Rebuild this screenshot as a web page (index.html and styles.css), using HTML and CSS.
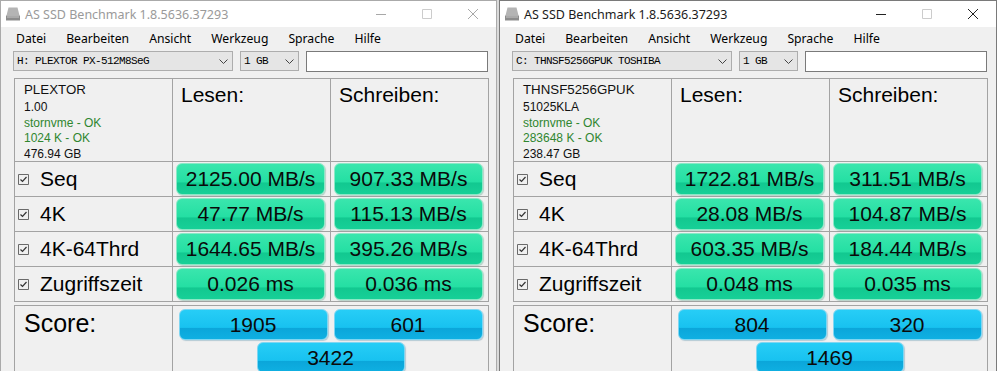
FILE: index.html
```html
<!DOCTYPE html>
<html lang="de">
  <head>
    <meta charset="UTF-8" />
    <meta name="viewport" content="width=device-width, initial-scale=1.0" />
    <title>AS SSD Benchmark</title>
    <link rel="stylesheet" href="styles.css">
  </head>
  <body>
    <div class="desk">
      <!-- left window, inactive -->
      <div class="win">
        <div class="titlebar">
          <svg class="app-icon" viewBox="0 0 16 16">
            <path d="M3.5 1.5h9l2 8h-13z" fill="#b4b4b4" />
            <path d="M1 9.5h14v5H1z" fill="#8c8c8c" />
            <path d="M2 11h12" stroke="#c8c8c8" stroke-width="1" />
          </svg>
          <span class="title">AS SSD Benchmark 1.8.5636.37293</span>
          <div class="caption">
            <span class="cap-btn"><svg viewBox="0 0 10 10"><path d="M0 5.5h10" /></svg></span>
            <span class="cap-btn off"><svg viewBox="0 0 10 10"><path d="M0.5 0.5h9v9h-9z" /></svg></span>
            <span class="cap-btn"><svg viewBox="0 0 10 10"><path d="M0 0l10 10M10 0L0 10" /></svg></span>
          </div>
        </div>
        <div class="menubar">
          <span>Datei</span><span>Bearbeiten</span><span>Ansicht</span><span>Werkzeug</span><span>Sprache</span><span>Hilfe</span>
        </div>
        <div class="toolbar">
          <div class="combo drive">
            <span>H: PLEXTOR PX-512M8SeG</span>
            <svg class="chev" viewBox="0 0 9 5"><path d="M0.5 0.5l4 4 4-4" /></svg>
          </div>
          <div class="combo size">
            <span>1 GB</span>
            <svg class="chev" viewBox="0 0 9 5"><path d="M0.5 0.5l4 4 4-4" /></svg>
          </div>
          <div class="textbox"></div>
        </div>
        <div class="results">
          <div class="cell info">
            <div class="name">PLEXTOR</div>
            <div class="sub first">1.00</div>
            <div class="sub ok">stornvme - OK</div>
            <div class="sub ok">1024 K - OK</div>
            <div class="sub">476.94 GB</div>
          </div>
          <div class="cell head">Lesen:</div>
          <div class="cell head">Schreiben:</div>

          <div class="cell label"><svg class="check" viewBox="0 0 11 11"><path class="box" d="M0.5 0.5h10v10h-10z" /><path class="tick" d="M2.5 5.5l2 2 4-4.5" /></svg>Seq</div>
          <div class="cell val"><div class="bar green">2125.00 MB/s</div></div>
          <div class="cell val"><div class="bar green">907.33 MB/s</div></div>

          <div class="cell label"><svg class="check" viewBox="0 0 11 11"><path class="box" d="M0.5 0.5h10v10h-10z" /><path class="tick" d="M2.5 5.5l2 2 4-4.5" /></svg>4K</div>
          <div class="cell val"><div class="bar green">47.77 MB/s</div></div>
          <div class="cell val"><div class="bar green">115.13 MB/s</div></div>

          <div class="cell label"><svg class="check" viewBox="0 0 11 11"><path class="box" d="M0.5 0.5h10v10h-10z" /><path class="tick" d="M2.5 5.5l2 2 4-4.5" /></svg>4K-64Thrd</div>
          <div class="cell val"><div class="bar green">1644.65 MB/s</div></div>
          <div class="cell val"><div class="bar green">395.26 MB/s</div></div>

          <div class="cell label"><svg class="check" viewBox="0 0 11 11"><path class="box" d="M0.5 0.5h10v10h-10z" /><path class="tick" d="M2.5 5.5l2 2 4-4.5" /></svg>Zugriffszeit</div>
          <div class="cell val"><div class="bar green">0.026 ms</div></div>
          <div class="cell val"><div class="bar green">0.036 ms</div></div>
        </div>
        <div class="score">
          <div class="score-label">Score:</div>
          <div class="score-vals">
            <div class="bar blue">1905</div>
            <div class="bar blue">601</div>
            <div class="bar blue total">3422</div>
          </div>
        </div>
      </div>

      <!-- right window, active -->
      <div class="win active">
        <div class="titlebar">
          <svg class="app-icon" viewBox="0 0 16 16">
            <path d="M3.5 1.5h9l2 8h-13z" fill="#b4b4b4" />
            <path d="M1 9.5h14v5H1z" fill="#8c8c8c" />
            <path d="M2 11h12" stroke="#c8c8c8" stroke-width="1" />
          </svg>
          <span class="title">AS SSD Benchmark 1.8.5636.37293</span>
          <div class="caption">
            <span class="cap-btn"><svg viewBox="0 0 10 10"><path d="M0 5.5h10" /></svg></span>
            <span class="cap-btn off"><svg viewBox="0 0 10 10"><path d="M0.5 0.5h9v9h-9z" /></svg></span>
            <span class="cap-btn"><svg viewBox="0 0 10 10"><path d="M0 0l10 10M10 0L0 10" /></svg></span>
          </div>
        </div>
        <div class="menubar">
          <span>Datei</span><span>Bearbeiten</span><span>Ansicht</span><span>Werkzeug</span><span>Sprache</span><span>Hilfe</span>
        </div>
        <div class="toolbar">
          <div class="combo drive">
            <span>C: THNSF5256GPUK TOSHIBA</span>
            <svg class="chev" viewBox="0 0 9 5"><path d="M0.5 0.5l4 4 4-4" /></svg>
          </div>
          <div class="combo size">
            <span>1 GB</span>
            <svg class="chev" viewBox="0 0 9 5"><path d="M0.5 0.5l4 4 4-4" /></svg>
          </div>
          <div class="textbox"></div>
        </div>
        <div class="results">
          <div class="cell info">
            <div class="name">THNSF5256GPUK</div>
            <div class="sub first">51025KLA</div>
            <div class="sub ok">stornvme - OK</div>
            <div class="sub ok">283648 K - OK</div>
            <div class="sub">238.47 GB</div>
          </div>
          <div class="cell head">Lesen:</div>
          <div class="cell head">Schreiben:</div>

          <div class="cell label"><svg class="check" viewBox="0 0 11 11"><path class="box" d="M0.5 0.5h10v10h-10z" /><path class="tick" d="M2.5 5.5l2 2 4-4.5" /></svg>Seq</div>
          <div class="cell val"><div class="bar green">1722.81 MB/s</div></div>
          <div class="cell val"><div class="bar green">311.51 MB/s</div></div>

          <div class="cell label"><svg class="check" viewBox="0 0 11 11"><path class="box" d="M0.5 0.5h10v10h-10z" /><path class="tick" d="M2.5 5.5l2 2 4-4.5" /></svg>4K</div>
          <div class="cell val"><div class="bar green">28.08 MB/s</div></div>
          <div class="cell val"><div class="bar green">104.87 MB/s</div></div>

          <div class="cell label"><svg class="check" viewBox="0 0 11 11"><path class="box" d="M0.5 0.5h10v10h-10z" /><path class="tick" d="M2.5 5.5l2 2 4-4.5" /></svg>4K-64Thrd</div>
          <div class="cell val"><div class="bar green">603.35 MB/s</div></div>
          <div class="cell val"><div class="bar green">184.44 MB/s</div></div>

          <div class="cell label"><svg class="check" viewBox="0 0 11 11"><path class="box" d="M0.5 0.5h10v10h-10z" /><path class="tick" d="M2.5 5.5l2 2 4-4.5" /></svg>Zugriffszeit</div>
          <div class="cell val"><div class="bar green">0.048 ms</div></div>
          <div class="cell val"><div class="bar green">0.035 ms</div></div>
        </div>
        <div class="score">
          <div class="score-label">Score:</div>
          <div class="score-vals">
            <div class="bar blue">804</div>
            <div class="bar blue">320</div>
            <div class="bar blue total">1469</div>
          </div>
        </div>
      </div>
    </div>
  </body>
</html>
```
FILE: styles.css
```css
* {
  box-sizing: border-box;
}

body {
  margin: 0;
  background: #dadada;
  font-family: 'Noto Sans', 'Liberation Sans', sans-serif;
  overflow: hidden;
}

.desk {
  display: flex;
  height: 371px;
  overflow: hidden;
}

.win {
  flex: none;
  width: 497px;
  height: 390px;
  margin-right: 2px;
  border: 1px solid #aaaaaa;
  background: #f0f0f0;
}

.win.active {
  width: 498px;
  margin-right: 0;
  border-color: #7a7a7a;
}

/* title bar */
.titlebar {
  height: 26px;
  background: #fff;
  display: flex;
  align-items: center;
}

.app-icon {
  width: 16px;
  height: 16px;
  margin: 0 4px 0 4px;
  flex: none;
}

.title {
  flex: 1;
  font-size: 12.5px;
  color: #9a9a9a;
}

.active .title {
  color: #1b1b1b;
}

.caption {
  display: flex;
}

.cap-btn {
  width: 46px;
  height: 26px;
  display: flex;
  align-items: center;
  justify-content: center;
}

.cap-btn svg {
  width: 10px;
  height: 10px;
  fill: none;
  stroke: #a8a8a8;
  stroke-width: 1;
}

.active .cap-btn svg {
  stroke: #222;
}

.cap-btn.off svg,
.active .cap-btn.off svg {
  stroke: #cccccc;
}

/* menu */
.menubar {
  height: 23px;
  display: flex;
  align-items: center;
  padding-left: 5px;
  font-size: 12.2px;
  color: #000;
}

.menubar span {
  padding: 0 10px;
}

/* drive selection */
.toolbar {
  display: flex;
  align-items: flex-start;
  gap: 7px;
  margin-top: 1px;
  padding-left: 12px;
  height: 21px;
}

.combo {
  height: 20px;
  background: #e5e5e5;
  border: 1px solid #adadad;
  display: flex;
  align-items: center;
  justify-content: space-between;
  padding: 0 4px 0 3px;
  font-family: 'Liberation Mono', 'DejaVu Sans Mono', monospace;
  font-size: 11px;
  letter-spacing: -0.6px;
  color: #000;
}

.combo.drive {
  width: 220px;
}

.combo.size {
  width: 59px;
}

.chev {
  width: 9px;
  height: 5px;
  fill: none;
  stroke: #444;
  stroke-width: 1;
}

.textbox {
  width: 182px;
  height: 21px;
  background: #fff;
  border: 1px solid #7a7a7a;
}

/* result table */
.results {
  display: grid;
  grid-template-columns: repeat(3, 157px);
  grid-template-rows: 82px repeat(4, 34px);
  gap: 1px;
  padding: 1px;
  width: 475px;
  margin: 6px 0 0 13px;
  background: #a3a3a3;
  font-family: 'Liberation Sans', Arial, sans-serif;
}

.cell {
  background: #f0f0f0;
}

.info {
  padding: 2px 9px;
  color: #111;
}

.info .name {
  font-size: 13.3px;
  line-height: 18px;
}

.info .sub {
  font-size: 12px;
  line-height: 15.5px;
}

.info .sub.first {
  margin-top: 1px;
}

.info .ok {
  color: #2f862f;
}

.head {
  padding: 4px 8px;
  font-size: 21px;
  line-height: 24px;
  color: #000;
}

.label {
  display: flex;
  align-items: center;
  padding-left: 3px;
  font-size: 21px;
  color: #000;
}

.check {
  width: 11px;
  height: 11px;
  margin-right: 11px;
  fill: none;
}

.check .box {
  stroke: #6a6a6a;
}

.check .tick {
  stroke: #333;
  stroke-width: 1.2;
}

.val {
  padding: 1px 5px 1px 3px;
}

.bar {
  height: 32px;
  border-radius: 6px;
  display: flex;
  align-items: center;
  justify-content: center;
  font-family: 'Liberation Sans', Arial, sans-serif;
  font-size: 21px;
  color: #0a0a0a;
}

.bar.green {
  border: 1px solid #8ae8c6;
  background: linear-gradient(#3ae6ad 0%, #24dfa3 60%, #12c890 63%, #17d097 100%);
  box-shadow: 1px 1px 1px rgba(0, 120, 80, 0.25);
}

.bar.blue {
  height: 31px;
  border: 1px solid #7ed6f2;
  background: linear-gradient(#27cdf6 0%, #18c2f0 60%, #0ba6da 63%, #0fb0e2 100%);
  box-shadow: 1px 1px 1px rgba(0, 90, 130, 0.25);
}

/* score */
.score {
  display: grid;
  grid-template-columns: 157px 315px;
  gap: 1px;
  padding: 1px;
  width: 475px;
  height: 80px;
  margin: 3px 0 0 13px;
  background: #a3a3a3;
}

.score-label {
  background: #f0f0f0;
  padding: 2px 9px;
  font-family: 'Liberation Sans', Arial, sans-serif;
  font-size: 25px;
  line-height: 30px;
  color: #000;
}

.score-vals {
  background: #f0f0f0;
  display: grid;
  grid-template-columns: 149px 149px;
  column-gap: 6px;
  row-gap: 2px;
  justify-content: center;
  align-content: start;
  padding-top: 3px;
}

.bar.total {
  grid-column: 1 / span 2;
  justify-self: center;
  width: 148px;
}
```
